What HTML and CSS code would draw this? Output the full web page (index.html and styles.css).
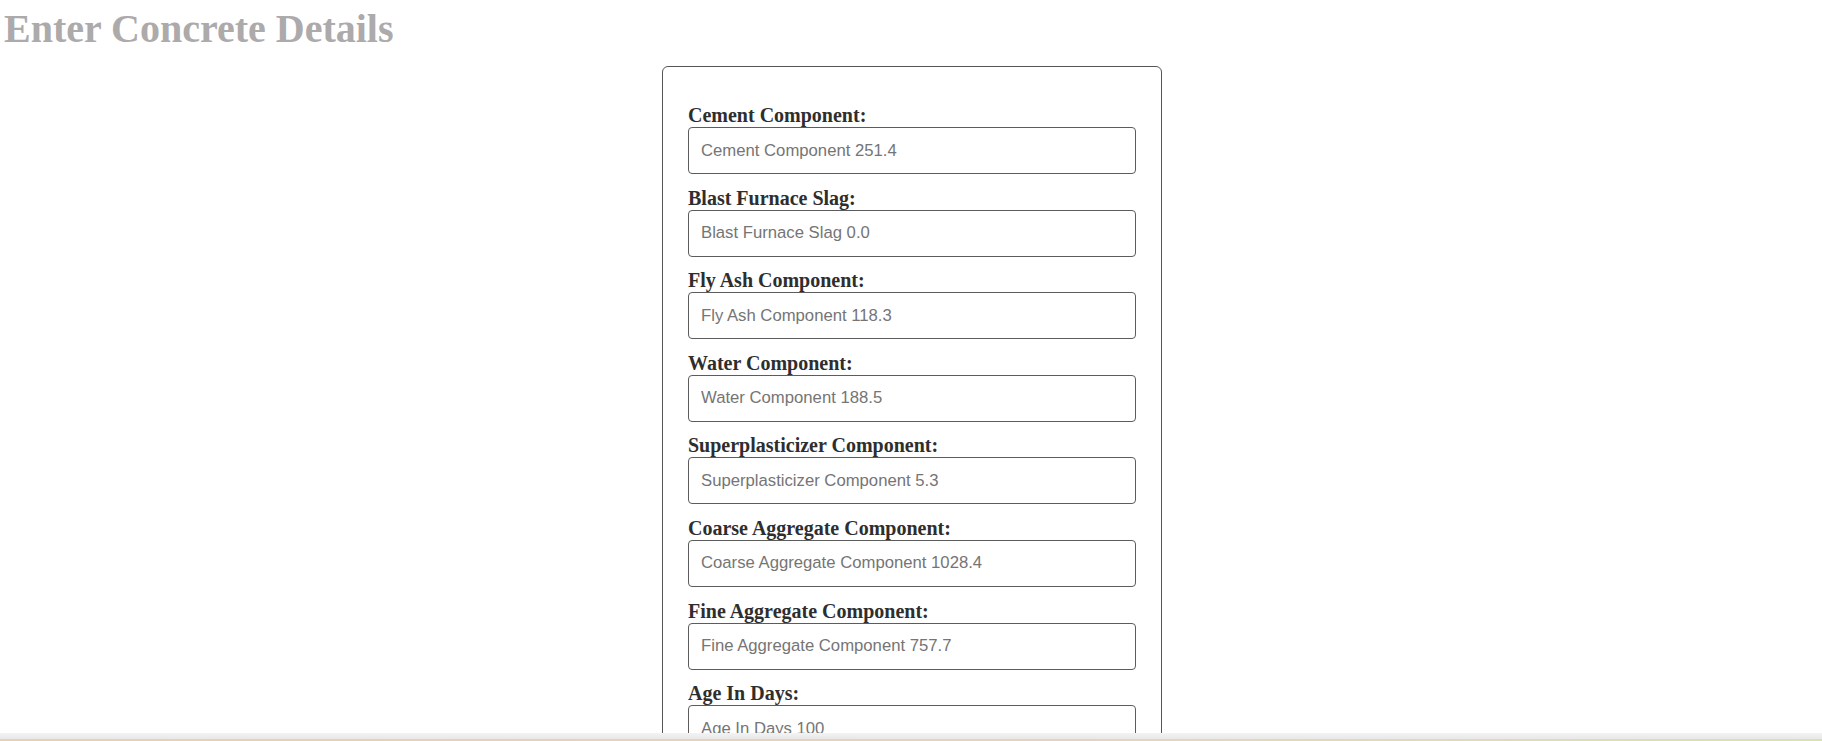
FILE: index.html
```html
<!DOCTYPE html>
<html lang="en">
<head>
<meta charset="utf-8">
<title>Enter Concrete Details</title>
<link rel="stylesheet" href="styles.css">
</head>
<body>
<h1 class="title">Enter Concrete Details</h1>
<div class="card">
  <form class="form">
    <div class="field">
      <label class="label" for="cement">Cement Component:</label>
      <input class="input" id="cement" type="text" placeholder="Cement Component 251.4">
    </div>
    <div class="field">
      <label class="label" for="slag">Blast Furnace Slag:</label>
      <input class="input" id="slag" type="text" placeholder="Blast Furnace Slag 0.0">
    </div>
    <div class="field">
      <label class="label" for="flyash">Fly Ash Component:</label>
      <input class="input" id="flyash" type="text" placeholder="Fly Ash Component 118.3">
    </div>
    <div class="field">
      <label class="label" for="water">Water Component:</label>
      <input class="input" id="water" type="text" placeholder="Water Component 188.5">
    </div>
    <div class="field">
      <label class="label" for="super">Superplasticizer Component:</label>
      <input class="input" id="super" type="text" placeholder="Superplasticizer Component 5.3">
    </div>
    <div class="field">
      <label class="label" for="coarse">Coarse Aggregate Component:</label>
      <input class="input" id="coarse" type="text" placeholder="Coarse Aggregate Component 1028.4">
    </div>
    <div class="field">
      <label class="label" for="fine">Fine Aggregate Component:</label>
      <input class="input" id="fine" type="text" placeholder="Fine Aggregate Component 757.7">
    </div>
    <div class="field">
      <label class="label" for="age">Age In Days:</label>
      <input class="input" id="age" type="text" placeholder="Age In Days 100">
    </div>
  </form>
</div>
<div class="bottom-bar"></div>
</body>
</html>
```

FILE: styles.css
```css
html, body {
  margin: 0;
  padding: 0;
  background: #ffffff;
}

body {
  font-family: "Liberation Serif", "Times New Roman", serif;
}

.title {
  margin: 6px 4px 0;
  font-size: 40px;
  font-weight: bold;
  line-height: 46px;
  color: #acaaaa;
}

.card {
  box-sizing: border-box;
  width: 500px;
  margin: 14px 0 0 calc(50% - 249px);
  padding: 37px 25px 40px;
  border: 1px solid #555555;
  border-radius: 6px;
}

.form {
  display: flex;
  flex-direction: column;
  gap: 12.6px;
}

.field {
  display: flex;
  flex-direction: column;
}

.label {
  font-family: "Liberation Serif", "Times New Roman", serif;
  font-size: 20px;
  font-weight: bold;
  line-height: 23px;
  color: #2e2e2e;
}

.input {
  box-sizing: border-box;
  width: 100%;
  height: 47px;
  margin: 0;
  padding: 0 12px;
  border: 1px solid #5c5c5c;
  border-radius: 4px;
  font-family: "Liberation Sans", Arial, sans-serif;
  font-size: 16.7px;
  color: #333333;
  background: #ffffff;
}

.input::placeholder {
  color: #757575;
  opacity: 1;
}

.bottom-bar {
  position: fixed;
  left: 0;
  right: 0;
  bottom: 0;
  height: 8px;
  background:
    linear-gradient(to right, #e9cfb4 0%, #e6d3bd 60%, #d9e2ad 100%) bottom / 100% 2px no-repeat,
    linear-gradient(to bottom, #f3f3f3 0%, #e4e4e4 100%);
}
```
